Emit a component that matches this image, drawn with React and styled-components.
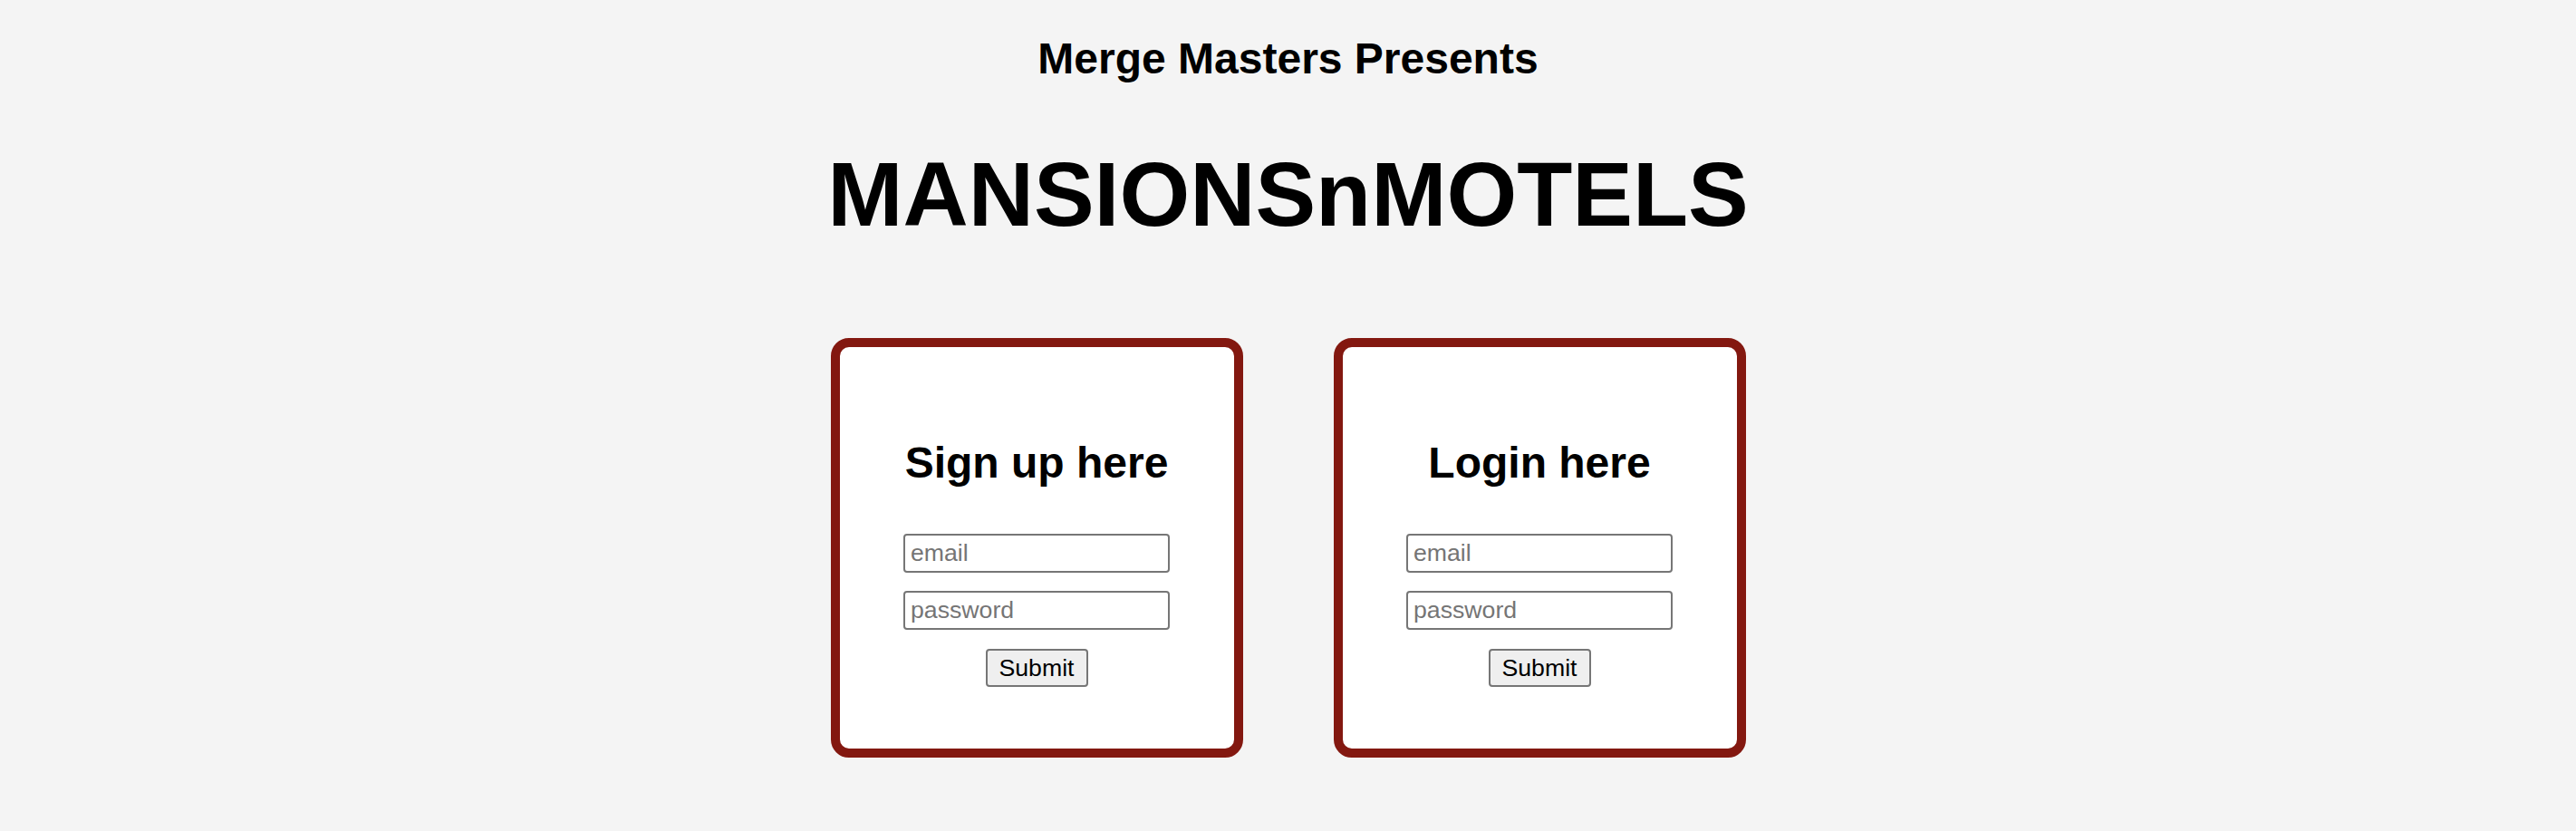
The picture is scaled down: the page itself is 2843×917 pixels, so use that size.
import React from "react";
import styled, { createGlobalStyle } from "styled-components";

const GlobalStyle = createGlobalStyle`
  body {
    margin: 0;
    background-color: #f4f4f4;
    font-family: "Liberation Sans", Arial, Helvetica, sans-serif;
    color: #000;
  }
`;

const Page = styled.div`
  display: flex;
  flex-direction: column;
  align-items: center;
  padding-top: 37px;
  min-height: 917px;
  box-sizing: border-box;
`;

const Presents = styled.h3`
  font-size: 48px;
  font-weight: 700;
  margin: 0;
  line-height: normal;
`;

const Brand = styled.h1`
  font-size: 100px;
  font-weight: 700;
  margin: 65px 0 0;
  line-height: normal;
`;

const Forms = styled.div`
  display: flex;
  gap: 100px;
  margin-top: 101px;
`;

const Card = styled.form`
  width: 455px;
  height: 463px;
  box-sizing: border-box;
  background-color: #fff;
  border: 10px solid #831810;
  border-radius: 20px;
  padding-top: 100px;
  display: flex;
  flex-direction: column;
  align-items: center;
`;

const Title = styled.h2`
  font-size: 48px;
  font-weight: 700;
  margin: 0 0 51px;
  line-height: normal;
`;

const Field = styled.input`
  width: 294px;
  height: 43px;
  box-sizing: border-box;
  border: 2px solid #767676;
  border-radius: 4px;
  padding: 0 6px;
  font-family: "Liberation Sans", Arial, sans-serif;
  font-size: 26.67px;
  color: #000;
  background: #fff;
  margin-bottom: ${({ $gap }) => $gap}px;
  &::placeholder {
    color: #757575;
  }
`;

const Submit = styled.button`
  width: 113px;
  height: 42px;
  box-sizing: border-box;
  border: 2px solid #767676;
  border-radius: 4px;
  background-color: #efefef;
  font-family: "Liberation Sans", Arial, sans-serif;
  font-size: 26.67px;
  color: #000;
  padding: 0;
`;

const AuthCard = ({ title }) => (
  <Card onSubmit={(e) => e.preventDefault()}>
    <Title>{title}</Title>
    <Field type="email" placeholder="email" $gap={20} />
    <Field type="password" placeholder="password" $gap={21} />
    <Submit type="submit">Submit</Submit>
  </Card>
);

export default function App() {
  return (
    <>
      <GlobalStyle />
      <Page>
        <Presents>Merge Masters Presents</Presents>
        <Brand>MANSIONSnMOTELS</Brand>
        <Forms>
          <AuthCard title="Sign up here" />
          <AuthCard title="Login here" />
        </Forms>
      </Page>
    </>
  );
}
